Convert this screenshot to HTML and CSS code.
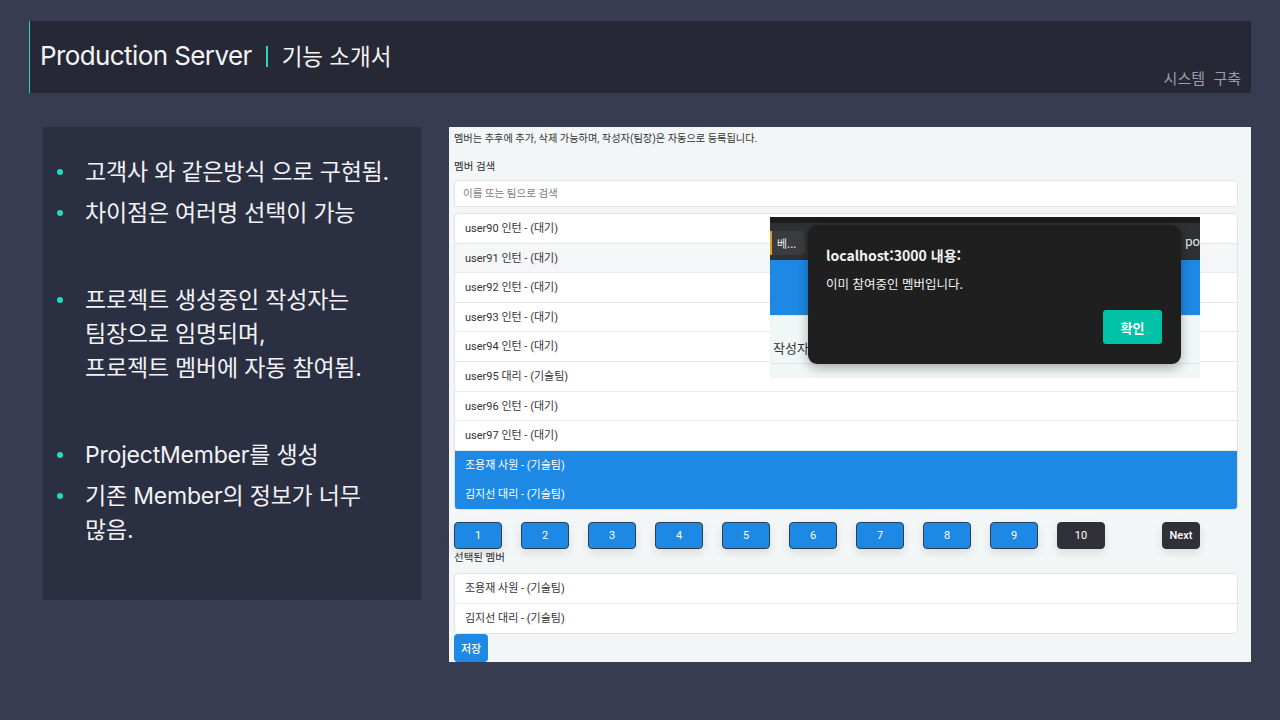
FILE: index.html
```html
<!DOCTYPE html>
<html lang="ko">
<head>
<meta charset="utf-8">
<title>Production Server</title>
<link rel="stylesheet" href="styles.css">
</head>
<body>
<div class="slide">
  <header class="head">
    <div class="head-title">
      <span class="t-main">Production Server</span>
      <span class="t-sep"></span>
      <span class="t-sub">기능 소개서</span>
    </div>
    <div class="head-tag">시스템&nbsp; 구축</div>
  </header>

  <main class="body">
    <section class="notes">
      <ul class="bullets">
        <li>고객사 와 같은방식 으로 구현됨.</li>
        <li>차이점은 여러명 선택이 가능</li>
        <li class="gap">프로젝트 생성중인 작성자는<br>팀장으로 임명되며,<br>프로젝트 멤버에 자동 참여됨.</li>
        <li class="gap">ProjectMember를 생성</li>
        <li>기존 Member의 정보가 너무<br>많음.</li>
      </ul>
    </section>

    <section class="shot">
      <p class="intro">멤버는 추후에 추가, 삭제 가능하며, 작성자(팀장)은 자동으로 등록됩니다.</p>
      <p class="label">멤버 검색</p>
      <div class="search">이름 또는 팀으로 검색</div>
      <ul class="list">
        <li>user90 인턴 - (대기)</li>
        <li class="hover">user91 인턴 - (대기)</li>
        <li>user92 인턴 - (대기)</li>
        <li>user93 인턴 - (대기)</li>
        <li>user94 인턴 - (대기)</li>
        <li>user95 대리 - (기술팀)</li>
        <li>user96 인턴 - (대기)</li>
        <li>user97 인턴 - (대기)</li>
        <li class="sel">조용재 사원 - (기술팀)</li>
        <li class="sel">김지선 대리 - (기술팀)</li>
      </ul>
      <div class="pager">
        <button class="pg">1</button>
        <button class="pg">2</button>
        <button class="pg">3</button>
        <button class="pg">4</button>
        <button class="pg">5</button>
        <button class="pg">6</button>
        <button class="pg">7</button>
        <button class="pg">8</button>
        <button class="pg">9</button>
        <button class="pg cur">10</button>
        <button class="pg next">Next</button>
      </div>
      <p class="label label-sel">선택된 멤버</p>
      <ul class="list list-sel">
        <li>조용재 사원 - (기술팀)</li>
        <li>김지선 대리 - (기술팀)</li>
      </ul>
      <button class="save">저장</button>

      <div class="capture">
        <div class="cap-top"></div>
        <div class="cap-tabs">
          <span class="cap-tab">베...</span>
          <span class="cap-po">po</span>
        </div>
        <div class="cap-blue"></div>
        <div class="cap-light">
          <span class="cap-text">작성자</span>
        </div>
        <div class="dialog">
          <div class="dlg-title">localhost:3000 내용:</div>
          <div class="dlg-msg">이미 참여중인 멤버입니다.</div>
          <div class="dlg-actions"><button class="dlg-ok">확인</button></div>
        </div>
      </div>
    </section>
  </main>
</div>
</body>
</html>
```

FILE: styles.css
```css
* { box-sizing: border-box; }
html, body { margin: 0; padding: 0; }
body {
  width: 1280px;
  height: 720px;
  background: #383c50;
  overflow: hidden;
  font-family: "Inter", "Noto Sans CJK KR", sans-serif;
}
.slide { padding-top: 21px; }

.head {
  margin-left: 29px;
  width: 1222px;
  height: 72px;
  background: #262935;
  border-left: 1px solid #2fd3b5;
  display: flex;
  justify-content: space-between;
  align-items: flex-start;
  padding: 0 10px 0 10px;
}
.head-title {
  display: flex;
  align-items: center;
  height: 68px;
  color: #f4f4f6;
}
.t-main {
  font-size: 26px;
  letter-spacing: -0.6px;
  font-weight: 400;
}
.t-sep {
  width: 2px;
  height: 21px;
  background: #2fd3b5;
  margin: 2px 14px 0 14px;
}
.t-sub {
  font-family: "Noto Sans CJK KR", sans-serif;
  font-size: 22.5px;
  font-weight: 400;
  letter-spacing: 0;
}
.head-tag {
  align-self: flex-end;
  margin-bottom: 5px;
  color: #9b9da8;
  font-family: "Noto Sans CJK KR", sans-serif;
  font-size: 15px;
}

.body {
  display: flex;
  align-items: flex-start;
  margin-top: 34px;
  margin-left: 43px;
  gap: 28px;
}

.notes {
  width: 378px;
  height: 473px;
  background: #2b2f42;
  padding-top: 28px;
}
.bullets {
  list-style: none;
  margin: 0;
  padding: 0 0 0 42px;
  color: #f2f2f4;
  font-size: 23px;
  line-height: 34px;
  font-family: "Inter", "Noto Sans CJK KR", sans-serif;
  letter-spacing: -0.2px;
}
.bullets li {
  position: relative;
  margin-bottom: 7px;
}
.bullets li::before {
  content: "";
  position: absolute;
  left: -28px;
  top: 14px;
  width: 6px;
  height: 6px;
  border-radius: 50%;
  background: #21dcc0;
}
.bullets li.gap { margin-top: 53px; }

.shot {
  position: relative;
  width: 802px;
  height: 535px;
  background: #f2f6f7;
  padding: 3px 13px 0 5px;
  font-family: Roboto, "Noto Sans CJK KR", sans-serif;
  font-size: 11px;
  color: #333;
  display: flex;
  flex-direction: column;
  align-items: flex-start;
}
.intro { margin: 0; line-height: 18px; font-size: 10.2px; }
.label { margin: 10px 0 0 0; line-height: 17px; font-size: 10.5px; font-weight: 400; color: #2a2a2a; }
.search {
  align-self: stretch;
  margin-top: 5px;
  height: 27px;
  background: #fff;
  border: 1px solid #dfe4e7;
  border-radius: 4px;
  padding-left: 8px;
  line-height: 25px;
  font-size: 10.5px;
  color: #7a7d80;
}
.list {
  align-self: stretch;
  list-style: none;
  margin: 6px 0 0 0;
  padding: 0;
  background: #fff;
  border: 1px solid #e0e4e7;
  border-radius: 4px;
  overflow: hidden;
}
.list li {
  height: 29.6px;
  line-height: 29px;
  padding-left: 10px;
  border-bottom: 1px solid #e6e9eb;
}
.list li:last-child { border-bottom: 0; }
.list li.hover { background: #f4f6f8; }
.list li.sel {
  background: #1e88e5;
  color: #fff;
  border-bottom-color: #1e88e5;
}
.pager {
  display: flex;
  margin-top: 12px;
}
.pg {
  width: 48px;
  height: 27px;
  margin-right: 19px;
  background: #1e88e5;
  border: 1px solid #2c3e52;
  border-radius: 4px;
  color: #fff;
  font-family: Roboto, sans-serif;
  font-size: 11px;
  padding: 0;
  box-shadow: 0 4px 8px rgba(0, 0, 0, 0.1);
}
.pg.cur { background: #2f3038; border-color: #2f3038; }
.pg.next {
  width: 38px;
  margin-left: 38px;
  margin-right: 0;
  background: #2f3038;
  border-color: #2f3038;
  font-weight: 500;
}
.label-sel { margin-top: 1px; line-height: 16px; }
.list-sel { margin-top: 7px; }
.save {
  height: 28px;
  width: 34px;
  padding: 0;
  background: #1e88e5;
  border: 0;
  border-radius: 4px;
  color: #fff;
  font-family: "Noto Sans CJK KR", sans-serif;
  font-size: 11px;
  font-weight: 500;
}

.capture {
  position: absolute;
  left: 321px;
  top: 90px;
  width: 430px;
  height: 161px;
  background: #f1f6f7;
  overflow: visible;
}
.cap-top { height: 6px; background: #1d1d1f; }
.cap-tabs {
  height: 37px;
  background: #2f3033;
  position: relative;
}
.cap-tab {
  position: absolute;
  left: 0;
  top: 8px;
  width: 35px;
  height: 24px;
  background: #3b3c3f;
  border-left: 2px solid #e0a020;
  color: #e8e8e8;
  font-family: "Noto Sans CJK KR", sans-serif;
  font-size: 11px;
  line-height: 24px;
  padding-left: 5px;
  border-radius: 0 4px 4px 0;
}
.cap-po {
  position: absolute;
  right: 0;
  top: 11px;
  color: #e8e8e8;
  font-family: Roboto, sans-serif;
  font-size: 13px;
}
.cap-blue { height: 55px; background: #1e88e5; }
.cap-light {
  height: 63px;
  background: #f1f6f7;
  border-top: 1px solid #e3e7ea;
  position: relative;
}
.cap-light::after {
  content: "";
  position: absolute;
  left: 0;
  right: 0;
  top: 47px;
  border-top: 1px solid #e3e7ea;
}
.cap-text {
  position: absolute;
  left: 3px;
  top: 22px;
  font-family: "Noto Sans CJK KR", sans-serif;
  font-size: 13px;
  color: #333;
}
.dialog {
  position: absolute;
  left: 38px;
  top: 8px;
  width: 373px;
  height: 139px;
  background: #1f1f1f;
  border-radius: 9px;
  box-shadow: 0 4px 12px rgba(0, 0, 0, 0.3);
  padding: 20px 19px 0 18px;
  color: #f2f2f2;
  font-family: "Noto Sans CJK KR", sans-serif;
}
.dlg-title { font-size: 14px; font-weight: 700; line-height: 20px; }
.dlg-msg { margin-top: 10px; font-size: 12.5px; line-height: 18px; }
.dlg-actions { display: flex; justify-content: flex-end; margin-top: 17px; }
.dlg-ok {
  width: 59px;
  height: 34px;
  background: #00c2a6;
  border: 0;
  border-radius: 3px;
  color: #fff;
  font-family: "Noto Sans CJK KR", sans-serif;
  font-size: 13px;
  font-weight: 700;
  padding: 0;
}
```
